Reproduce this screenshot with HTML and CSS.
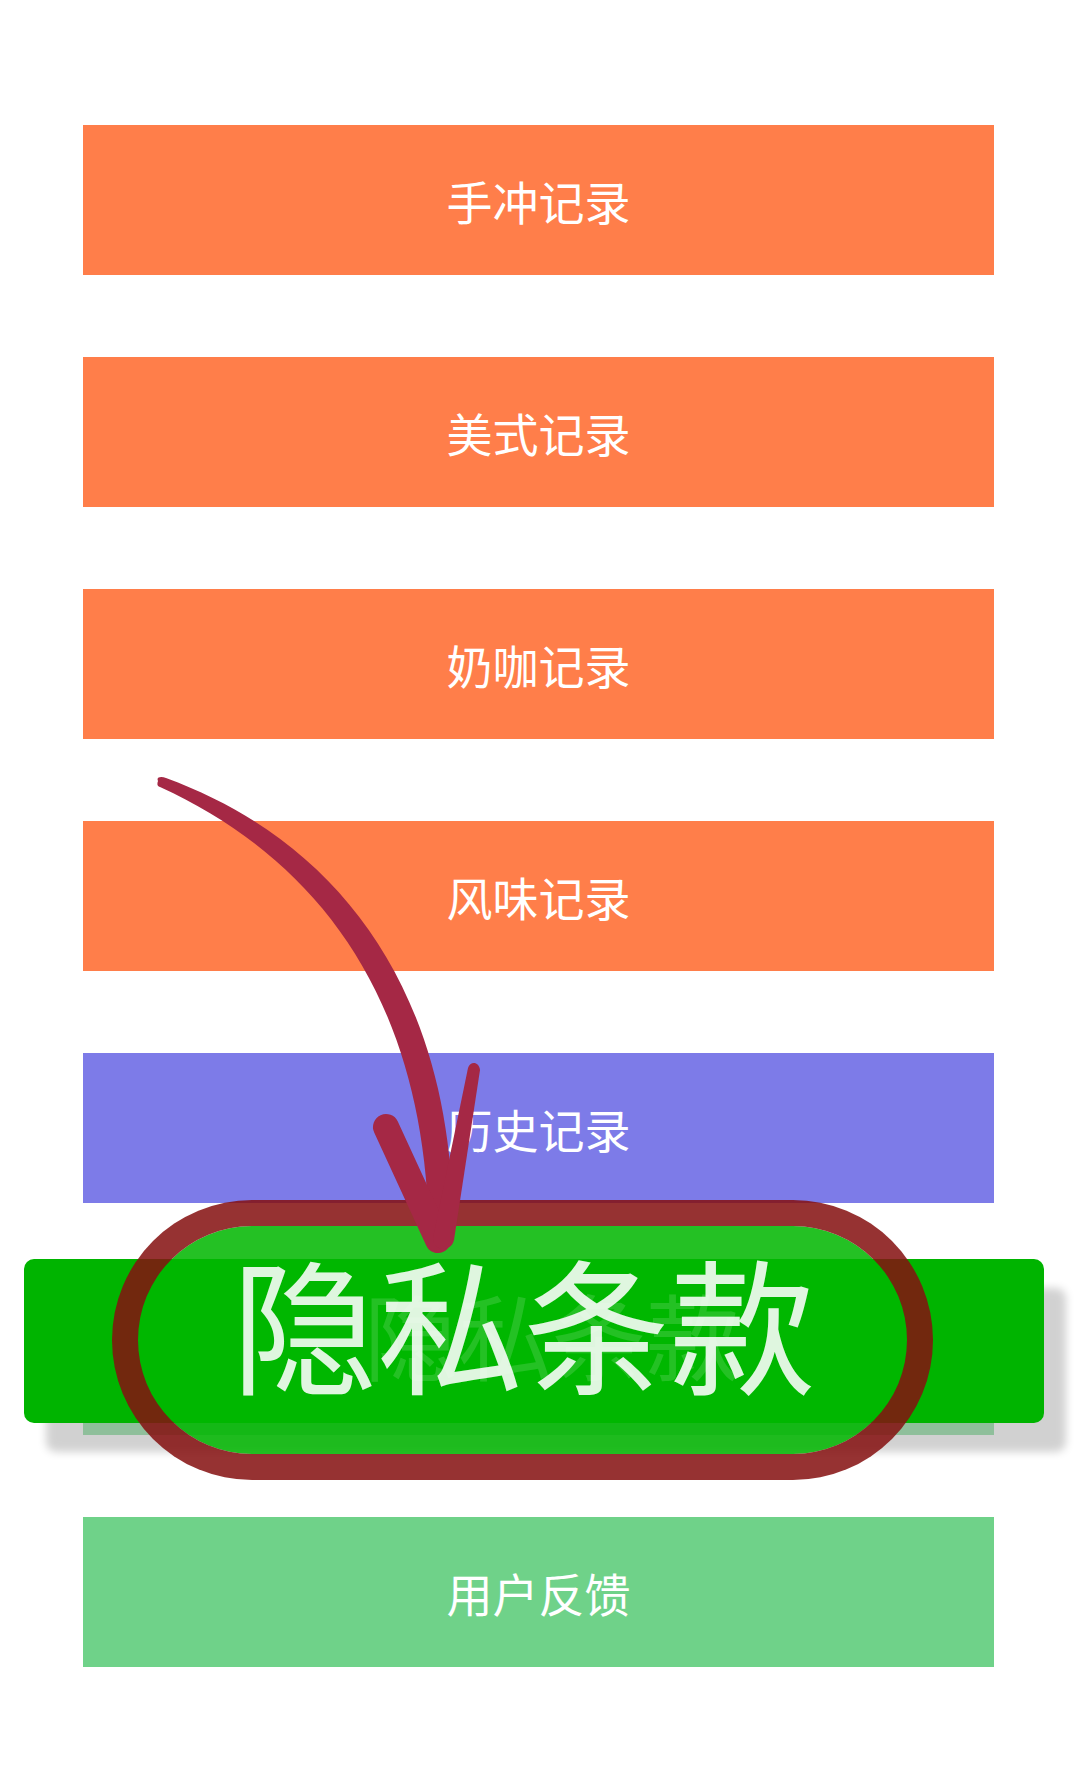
FILE: index.html
```html
<!DOCTYPE html>
<html lang="zh-CN">
<head>
<meta charset="utf-8">
<title>记录</title>
<link rel="stylesheet" href="styles.css">
</head>
<body>
<div class="page">
  <div class="list">
    <div class="bar orange">手冲记录</div>
    <div class="bar orange">美式记录</div>
    <div class="bar orange">奶咖记录</div>
    <div class="bar orange">风味记录</div>
    <div class="bar purple">历史记录</div>
    <div class="bar hidden-bar">隐私条款</div>
    <div class="bar green">用户反馈</div>
  </div>

  <div class="zoom-bar"><span class="ghost">隐私条款</span></div>
  <div class="pill"><span class="big">隐私条款</span></div>

  <svg class="arrow" width="1080" height="1790" viewBox="0 0 1080 1790" xmlns="http://www.w3.org/2000/svg">
    <path d="M158 781 C 156 777 161 776 166 778 C 341 842 456 995 453 1238 C 452 1253 429 1253 429 1240 C 427 1002 320 860 160 787 C 157 786 157 784 158 781 Z" fill="#a52845"/>
    <path d="M386 1127 L 438 1240" stroke="#a52845" stroke-width="26" stroke-linecap="round" fill="none"/>
    <path d="M468 1068 C 470 1061 479 1061 480 1070 L 454 1240 C 451 1253 432 1251 433 1238 Z" fill="#a52845"/>
  </svg>
</div>
</body>
</html>
```

FILE: styles.css
```css
html, body {
  margin: 0;
  padding: 0;
  background: #ffffff;
}

.page {
  position: relative;
  width: 1080px;
  height: 1790px;
  overflow: hidden;
  font-family: "Noto Sans CJK SC", "Noto Sans", sans-serif;
}

.list {
  display: flex;
  flex-direction: column;
  align-items: flex-start;
  gap: 82px;
  padding-top: 125px;
  padding-left: 83px;
}

.bar {
  width: 911px;
  height: 150px;
  display: flex;
  align-items: center;
  justify-content: center;
  color: #ffffff;
  font-size: 46px;
  line-height: 1;
}

.orange { background: #ff7e4a; }
.purple { background: #7d7be8; }
.green { background: #6fd289; }
.hidden-bar { background: #afeabd; color: transparent; }

.zoom-bar {
  position: absolute;
  left: 24px;
  top: 1259px;
  width: 1020px;
  height: 164px;
  border-radius: 10px;
  background: #00b400;
  box-shadow: 22px 29px 8px rgba(0, 0, 0, 0.18);
  display: flex;
  align-items: center;
  justify-content: center;
  z-index: 2;
}

.ghost {
  color: #ffffff;
  font-size: 94px;
  line-height: 1;
  margin-left: 36px;
  padding-bottom: 16px;
}

.pill {
  position: absolute;
  left: 112px;
  top: 1200px;
  width: 769px;
  height: 228px;
  border: 26px solid rgba(133, 16, 16, 0.86);
  border-radius: 140px;
  background: rgba(0, 183, 0, 0.86);
  background-clip: padding-box;
  display: flex;
  align-items: center;
  justify-content: center;
  z-index: 3;
}

.big {
  color: rgba(255, 255, 255, 0.875);
  font-size: 146px;
  line-height: 1;
  padding-bottom: 40px;
  margin-left: 2px;
}

.arrow {
  position: absolute;
  left: 0;
  top: 0;
  z-index: 4;
  pointer-events: none;
}
```
